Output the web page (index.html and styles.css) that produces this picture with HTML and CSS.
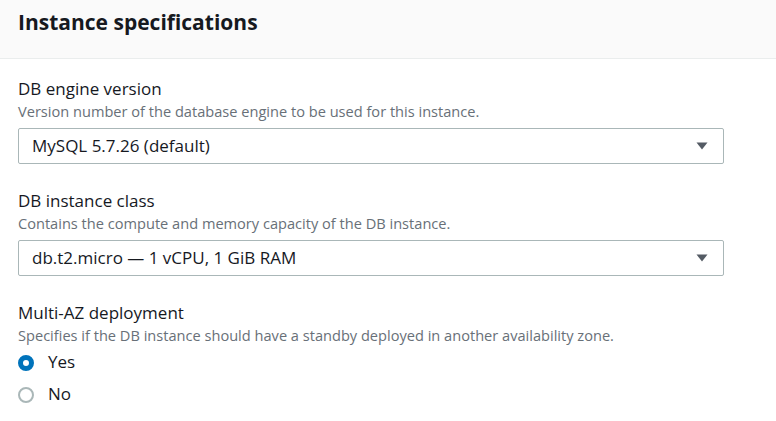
FILE: index.html
```html
<!DOCTYPE html>
<html lang="en">
<head>
<meta charset="utf-8">
<title>Instance specifications</title>
<link rel="stylesheet" href="styles.css">
</head>
<body>
<div class="panel">
  <div class="panel-header">
    <h2 class="panel-title">Instance specifications</h2>
  </div>
  <div class="panel-body">
    <div class="field">
      <div class="field-label">DB engine version</div>
      <div class="field-desc">Version number of the database engine to be used for this instance.</div>
      <div class="select">
        <span class="select-value">MySQL 5.7.26 (default)</span>
        <svg class="caret" width="12" height="8" viewBox="0 0 12 8"><polygon points="0.5,0.5 11.5,0.5 6,7.5" fill="#545b64"/></svg>
      </div>
    </div>
    <div class="field">
      <div class="field-label">DB instance class</div>
      <div class="field-desc">Contains the compute and memory capacity of the DB instance.</div>
      <div class="select">
        <span class="select-value">db.t2.micro — 1 vCPU, 1 GiB RAM</span>
        <svg class="caret" width="12" height="8" viewBox="0 0 12 8"><polygon points="0.5,0.5 11.5,0.5 6,7.5" fill="#545b64"/></svg>
      </div>
    </div>
    <div class="field">
      <div class="field-label">Multi-AZ deployment</div>
      <div class="field-desc">Specifies if the DB instance should have a standby deployed in another availability zone.</div>
      <div class="radios">
        <div class="radio-row">
          <span class="radio radio-checked"></span>
          <span class="radio-label">Yes</span>
        </div>
        <div class="radio-row">
          <span class="radio"></span>
          <span class="radio-label">No</span>
        </div>
      </div>
    </div>
  </div>
</div>
</body>
</html>
```

FILE: styles.css
```css
html, body {
  margin: 0;
  padding: 0;
  background: #ffffff;
}
body {
  font-family: "Open Sans", "Noto Sans", Arial, sans-serif;
  color: #16191f;
}
.panel-header {
  height: 58px;
  background: #fafafa;
  border-bottom: 1px solid #eaeded;
  padding: 0 18px;
  box-sizing: content-box;
}
.panel-title {
  margin: 0;
  padding-top: 8px;
  font-size: 21px;
  line-height: 28px;
  font-weight: 700;
  color: #16191f;
}
.panel-body {
  padding: 19px 18px 0 18px;
  width: 706px;
  display: flex;
  flex-direction: column;
  gap: 26px;
}
.field {
  display: flex;
  flex-direction: column;
}
.field-label {
  font-size: 17px;
  line-height: 22px;
  color: #16191f;
}
.field-desc {
  font-size: 14.6px;
  line-height: 22px;
  color: #687078;
}
.select {
  margin-top: 6px;
  height: 36px;
  box-sizing: border-box;
  border: 1px solid #aab7b8;
  border-radius: 2px;
  display: flex;
  align-items: center;
  justify-content: space-between;
  padding: 0 15px 0 13px;
}
.select-value {
  font-size: 17px;
  line-height: 22px;
  color: #16191f;
}
.caret {
  display: block;
}
.radios {
  margin-top: 4px;
  display: flex;
  flex-direction: column;
  gap: 8px;
}
.radio-row {
  display: flex;
  align-items: center;
  height: 24px;
}
.radio {
  width: 16px;
  height: 16px;
  box-sizing: border-box;
  border-radius: 50%;
  border: 2px solid #aab7b8;
  background: #fff;
  margin-right: 14px;
  margin-top: 2px;
}
.radio-checked {
  border: 5px solid #0073bb;
}
.radio-label {
  font-size: 17px;
  line-height: 24px;
}
```
